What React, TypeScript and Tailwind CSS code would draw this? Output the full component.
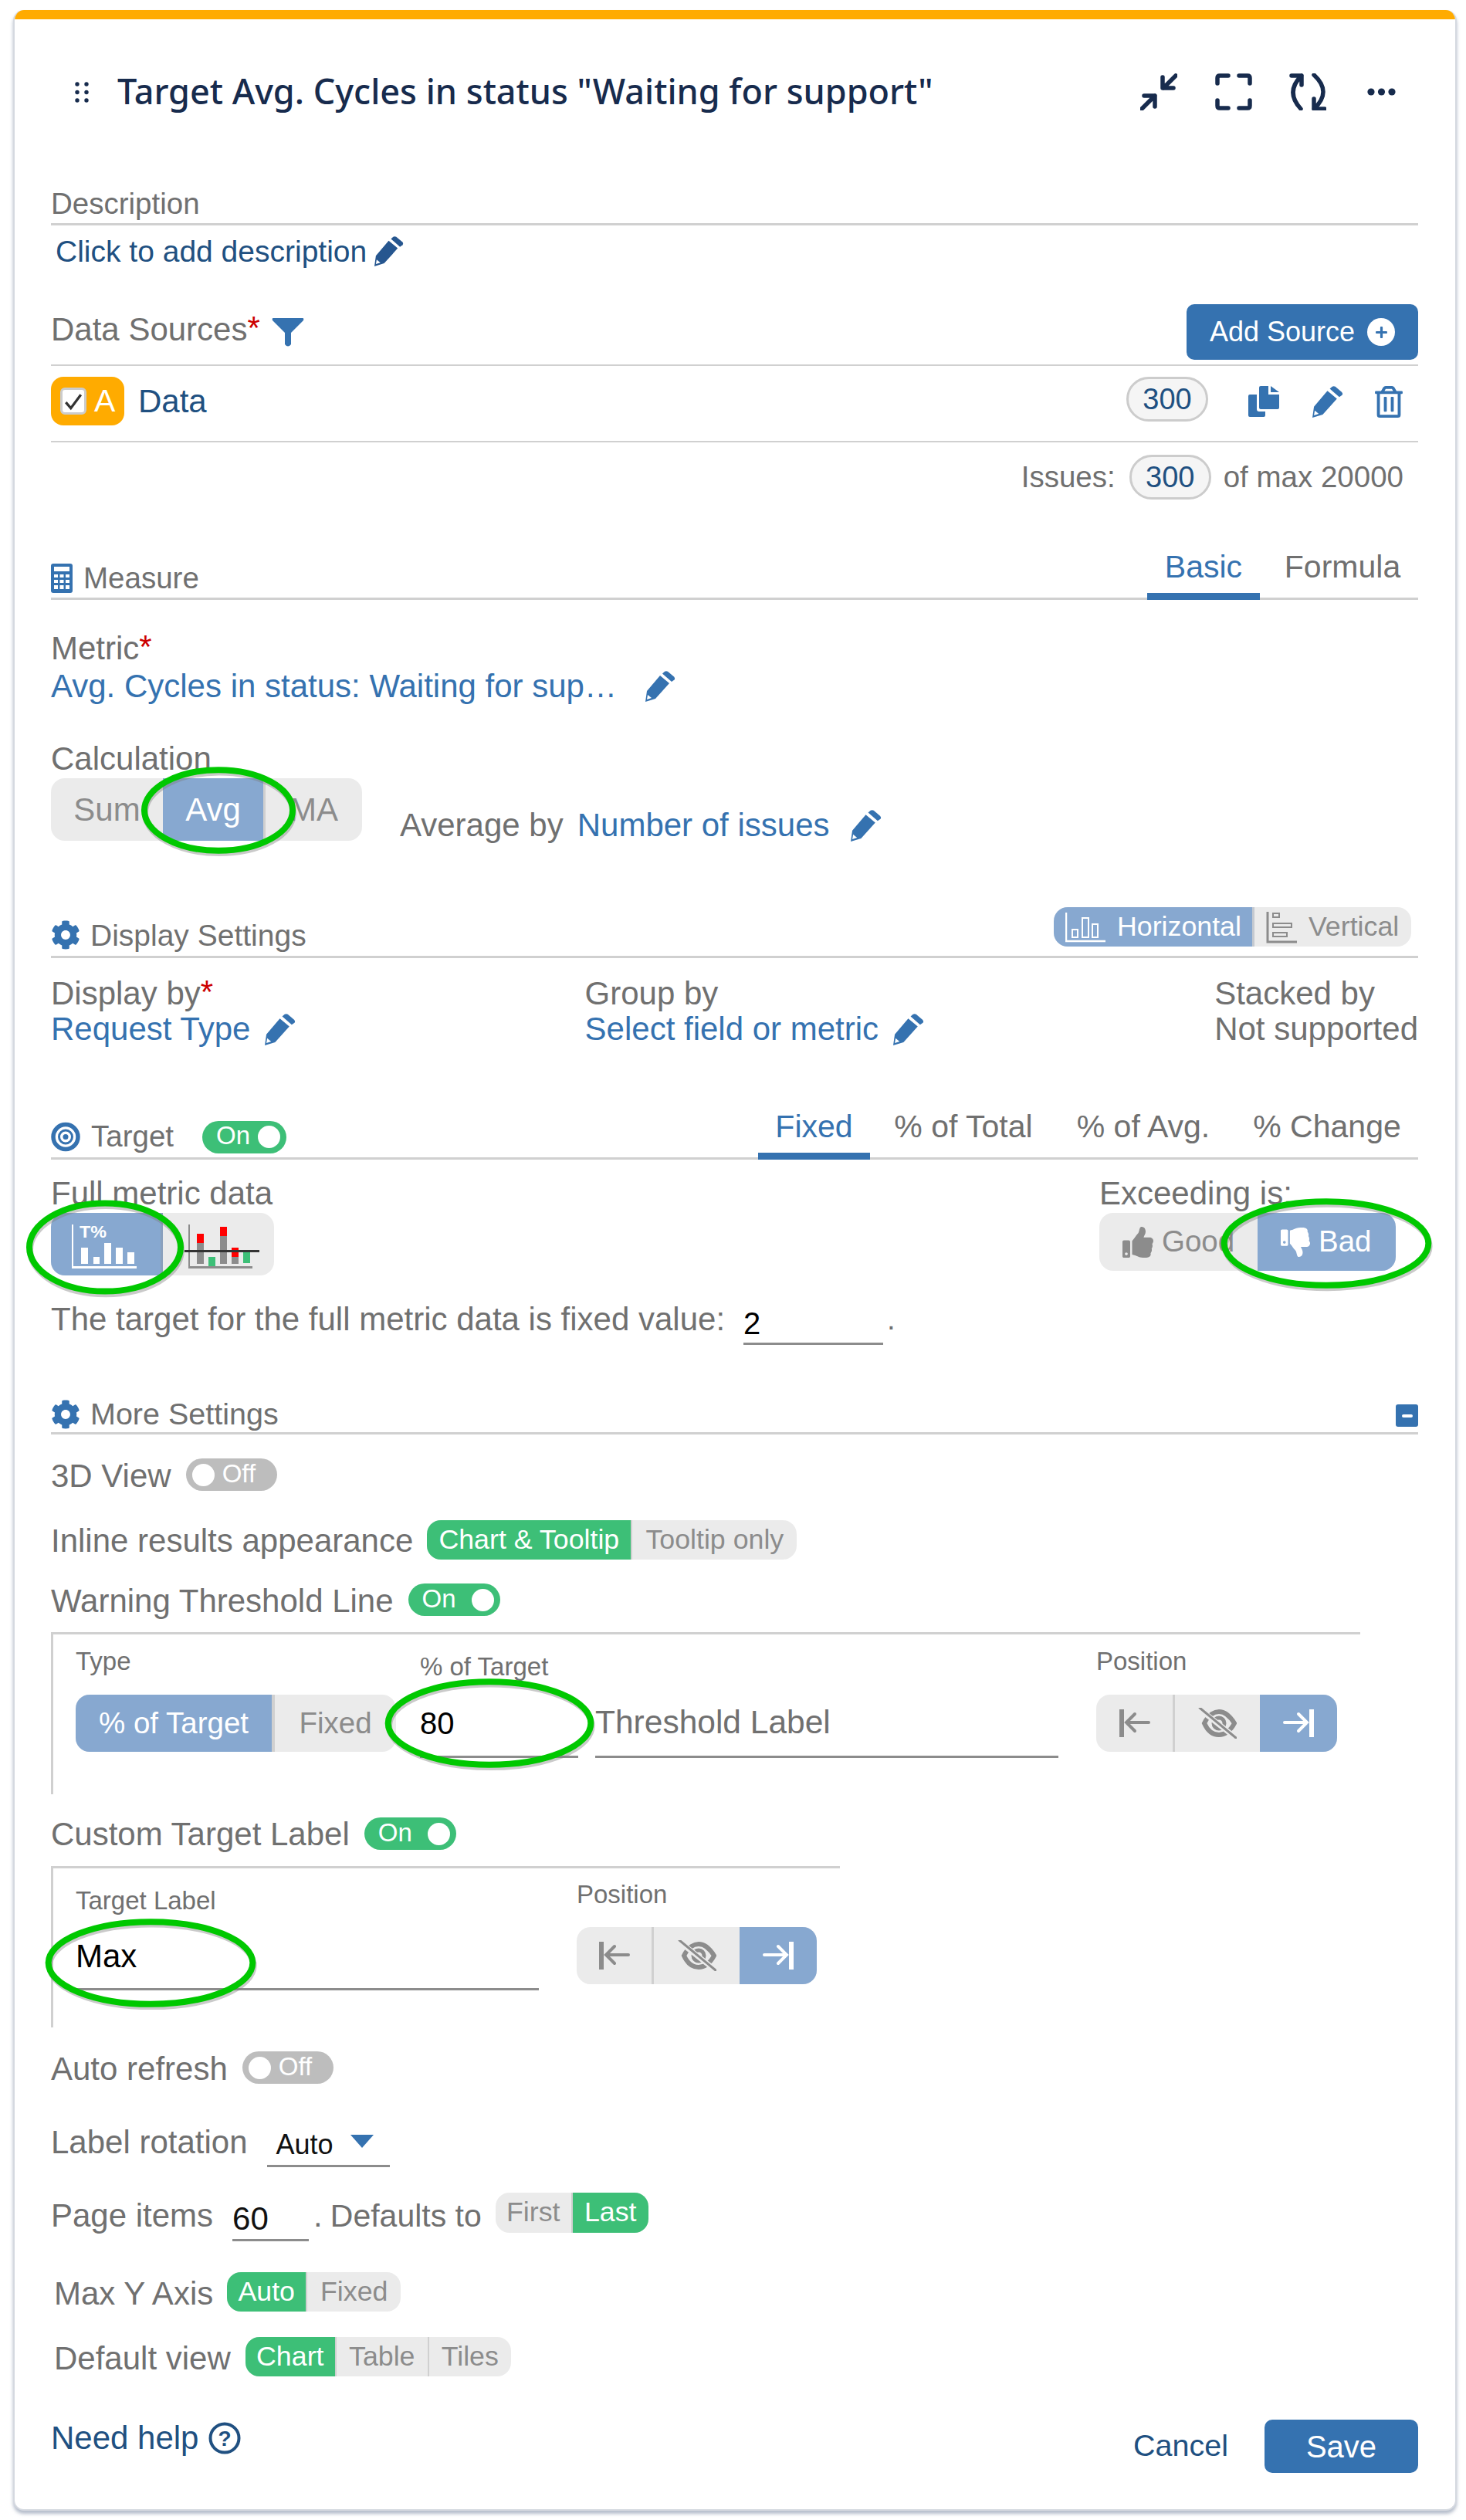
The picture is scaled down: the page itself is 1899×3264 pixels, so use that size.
import React from "react";
import { FaCog, FaRegTrashAlt, FaThumbsUp, FaThumbsDown, FaPlus } from "react-icons/fa";

const Pencil = ({ className }: { className: string }) => (
  <svg viewBox="0 0 40 40" className={className} fill="currentColor">
    <path d="M3 26 L20 6 L32 16 L14 36 L1 40 Z M4 31 L3 37 L9 35 Z" fillRule="evenodd" />
    <path d="M23 3.5 L26 0.8 Q28 -0.5 30 0.8 L38 7.5 Q40 9.5 38.5 11.5 L35 14 Z" />
  </svg>
);

const Star = () => <span className="text-[#cc0000] relative -top-[2px]">*</span>;

const Gear = () => <FaCog className="w-[38px] h-[38px] text-[#3572b0] shrink-0" />;

const Toggle = ({ on, className }: { on: boolean; className: string }) =>
  on ? (
    <div className={`flex items-center justify-between rounded-full bg-[#3dbf77] pl-[18px] pr-[8px] text-white text-[33px] leading-none shrink-0 ${className}`}>
      <span className="-mt-[4px]">On</span>
      <span className="block w-[29px] h-[29px] rounded-full bg-white" />
    </div>
  ) : (
    <div className={`flex items-center rounded-full bg-[#bdbdbd] pl-[8px] gap-[10px] text-white text-[33px] leading-none shrink-0 ${className}`}>
      <span className="block w-[29px] h-[29px] rounded-full bg-white" />
      <span className="-mt-[4px]">Off</span>
    </div>
  );

const Tab = ({ label, active, w }: { label: string; active?: boolean; w: string }) => (
  <div className={`flex items-center justify-center -mb-[3px] h-[70px] pb-[7px] text-[41px] leading-none ${w} ${active ? "text-[#3572b0] border-b-[9px] border-[#3572b0]" : "text-[#707070] border-b-[9px] border-transparent"}`}>
    {label}
  </div>
);

const Seg = ({ items, className, size }: { items: { label: string; w: string; active?: boolean }[]; className: string; size: string }) => (
  <div className={`flex rounded-[18px] overflow-hidden bg-[#ebebeb] text-[#8c8c8c] shrink-0 ${className} ${size}`}>
    {items.map((it, i) => (
      <div key={i} className={`flex items-center justify-center h-full border-r-[2px] last:border-r-0 border-[#d0d0d0] ${it.w} ${it.active ? "bg-[#3dbf77] text-white" : ""}`}>
        {it.label}
      </div>
    ))}
  </div>
);

const ArrowLeftBar = () => (
  <svg viewBox="0 0 40 36" className="w-[40px] h-[36px]" fill="none" stroke="currentColor" strokeWidth="4" strokeLinecap="round">
    <path d="M3 0 V36" strokeWidth="6" strokeLinecap="butt" />
    <path d="M38 17 H9 M20 6 L9 17 L20 28" />
  </svg>
);
const ArrowRightBar = () => (
  <svg viewBox="0 0 40 36" className="w-[40px] h-[36px]" fill="none" stroke="currentColor" strokeWidth="4" strokeLinecap="round">
    <path d="M37 0 V36" strokeWidth="6" strokeLinecap="butt" />
    <path d="M2 17 H31 M20 6 L31 17 L20 28" />
  </svg>
);
const EyeOff = () => (
  <svg viewBox="0 0 50 40" className="w-[50px] h-[40px]" fill="none" stroke="currentColor">
    <path d="M8 20 C14 8 22 5 27 5 C36 5 42 12 47 20 C42 30 34 35 27 35 C18 35 12 29 8 20 Z" strokeWidth="6" />
    <circle cx="27" cy="20" r="7" strokeWidth="5" />
    <path d="M1 1 L49 39" strokeWidth="7" stroke="#ebebeb" />
    <path d="M2 0 L49 39" strokeWidth="3" strokeLinecap="round" />
  </svg>
);

const PosSeg = ({ widths }: { widths: [string, string, string] }) => (
  <div className="flex h-[74px] rounded-[18px] overflow-hidden bg-[#ebebeb] text-[#8c8c8c] shrink-0">
    <div className={`flex items-center justify-center border-r-[3px] border-[#d0d0d0] ${widths[0]}`}><ArrowLeftBar /></div>
    <div className={`flex items-center justify-center ${widths[1]}`}><EyeOff /></div>
    <div className={`flex items-center justify-center bg-[#87a8d0] text-white ${widths[2]}`}><ArrowRightBar /></div>
  </div>
);

const Header = ({ children, right, h, inner }: { children: React.ReactNode; right?: React.ReactNode; h: string; inner?: string }) => (
  <div className={`flex justify-between items-end border-b-[3px] border-[#d0d0d0] ${h}`}>
    <div className={`flex items-center h-full ${inner ?? ""}`}>{children}</div>
    {right}
  </div>
);

const Ellipse = ({ className }: { className: string }) => (
  <svg className={`absolute overflow-visible pointer-events-none ${className}`} viewBox="0 0 100 100" preserveAspectRatio="none">
    <ellipse cx="50" cy="50" rx="49" ry="48" fill="none" stroke="#7a7a7a" strokeOpacity="0.4" strokeWidth="8" vectorEffect="non-scaling-stroke" transform="translate(0.5 3)" />
    <ellipse cx="50" cy="50" rx="49" ry="48" fill="none" stroke="#00c800" strokeWidth="8" vectorEffect="non-scaling-stroke" />
  </svg>
);

export default function App() {
  return (
    <div className="relative bg-white w-[1899px] h-[3264px] pt-[13px] pl-[17px] text-[#707070] text-[42px] leading-none" style={{ fontFamily: '"Liberation Sans", Arial, sans-serif' }}>
      <div className="w-[1870px] h-[3239px] bg-white border-x-[2px] border-b-[2px] border-[#d5d9e0] rounded-[14px] overflow-hidden shadow-[0_4px_4px_rgba(120,135,160,0.55)]">
        <div className="h-[12px] bg-[#ffab00]" />
        <div className="pl-[47px] pr-[48px]">
          {/* Title */}
          <div className="flex items-center justify-between h-[48px] mt-[70px]">
            <div className="flex items-center">
              <svg viewBox="0 0 18 27" className="w-[18px] h-[27px] ml-[31px] text-[#172b4d]" fill="currentColor">
                <circle cx="3" cy="3" r="2.7" /><circle cx="15" cy="3" r="2.7" />
                <circle cx="3" cy="13.5" r="2.7" /><circle cx="15" cy="13.5" r="2.7" />
                <circle cx="3" cy="24" r="2.7" /><circle cx="15" cy="24" r="2.7" />
              </svg>
              <div className="ml-[37px] -mt-[4px] text-[45px] font-medium whitespace-nowrap text-[#172b4d]" style={{ fontFamily: '"Noto Sans", "Open Sans", sans-serif' }}>
                Target Avg. Cycles in status "Waiting for support"
              </div>
            </div>
            <div className="flex items-center text-[#172b4d] mr-[29px]">
              <svg viewBox="0 0 48 48" className="w-[48px] h-[48px]" fill="none" stroke="currentColor" strokeWidth="5.5" strokeLinecap="round" strokeLinejoin="round">
                <path d="M46 3 L30 19 M29 5 V19 H43" />
                <path d="M2 46 L19 29 M5 29 H19 V43" />
              </svg>
              <svg viewBox="0 0 48 48" className="w-[48px] h-[48px] ml-[49px]" fill="none" stroke="currentColor" strokeWidth="5.5" strokeLinecap="round" strokeLinejoin="round">
                <path d="M3 13 V6 Q3 3 6 3 H17 M31 3 H42 Q45 3 45 6 V13 M45 35 V42 Q45 45 42 45 H31 M17 45 H6 Q3 45 3 42 V35" />
              </svg>
              <svg viewBox="0 0 48 48" className="w-[48px] h-[48px] ml-[48px]" fill="none" stroke="currentColor" strokeWidth="5.5" strokeLinecap="round" strokeLinejoin="round">
                <path d="M3 3 H16 V15 M16 3 Q-5.5 24 15 46" />
                <path d="M46 46 H32 V33 M32 2 Q56 24 32 46" />
              </svg>
              <svg viewBox="0 0 37 10" className="w-[37px] h-[10px] ml-[53px]" fill="currentColor">
                <circle cx="5" cy="5" r="4.6" /><circle cx="18.5" cy="5" r="4.6" /><circle cx="32" cy="5" r="4.6" />
              </svg>
            </div>
          </div>

          {/* Description */}
          <div className="mt-[97px] h-[52px] flex items-center border-b-[3px] border-[#d0d0d0] text-[38.5px]">Description</div>
          <div className="mt-[13px] h-[40px] flex items-center ml-[6px] text-[39px] text-[#205081]">
            Click to add description
            <Pencil className="w-[39px] h-[39px] ml-[9px] text-[#26568f]" />
          </div>

          {/* Data Sources */}
          <div className="mt-[49px] flex justify-between items-start border-b-[2px] border-[#d0d0d0] h-[80px]">
            <div className="flex items-center h-[66px]">
              <span>Data Sources<Star /></span>
              <svg viewBox="0 0 42 37" className="w-[42px] h-[37px] ml-[15px] mt-[6px] text-[#3572b0]" fill="currentColor">
                <path d="M2 0 H40 Q42 0 41 3 L25 19 V34 Q21 39 17 34 V19 L1 3 Q0 0 2 0 Z" />
              </svg>
            </div>
            <div className="flex items-center w-[300px] h-[72px] rounded-[10px] bg-[#3572b0] text-white text-[36px] pl-[30px]">
              Add Source
              <span className="ml-[16px] flex items-center justify-center w-[36px] h-[36px] rounded-full bg-white text-[#3572b0]"><FaPlus className="w-[17px] h-[17px]" /></span>
            </div>
          </div>

          {/* Row A */}
          <div className="flex items-start justify-between h-[99px] border-b-[2px] border-[#d0d0d0] pt-[14px]">
            <div className="flex items-start">
              <div className="relative flex items-center w-[95px] h-[63px] rounded-[16px] bg-[#ffab00] pl-[12px]">
                <div className="flex items-center justify-center w-[34px] h-[35px] rounded-[6px] bg-white border-[3px] border-[#cccccc]">
                  <svg viewBox="0 0 24 24" className="w-[26px] h-[26px]" fill="none" stroke="#333333" strokeWidth="3"><path d="M3 13 L9 20 L21 4" /></svg>
                </div>
                <span className="ml-[10px] text-white text-[41px]">A</span>
              </div>
              <span className="ml-[18px] mt-[11px] text-[#205081]">Data</span>
            </div>
            <div className="flex items-start">
              <div className="flex items-center justify-center w-[106px] h-[58px] rounded-full bg-[#f5f5f5] border-[3px] border-[#cccccc] text-[38px] text-[#205081]">300</div>
              <svg viewBox="0 0 40 40" className="w-[40px] h-[40px] ml-[52px] mt-[12px] text-[#3572b0]" fill="currentColor">
                <path d="M14 2 Q14 0 16 0 H26 V11 H40 V28 Q40 30 38 30 H16 Q14 30 14 28 Z" />
                <path d="M29 0 L40 8 H29 Z" />
                <path d="M0 13 Q0 11 2 11 H11 V30 Q11 33 14 33 H22 V38 Q22 40 20 40 H2 Q0 40 0 38 Z" />
              </svg>
              <Pencil className="w-[41px] h-[41px] ml-[42px] mt-[12px] text-[#3572b0]" />
              <FaRegTrashAlt className="w-[36px] h-[41px] ml-[41px] mr-[20px] mt-[12px] text-[#3572b0]" />
            </div>
          </div>

          {/* Issues */}
          <div className="mt-[16px] flex items-center justify-end h-[58px] pr-[19px] text-[38.5px]">
            Issues:
            <div className="flex items-center justify-center ml-[18px] w-[106px] h-[58px] rounded-full bg-[#f5f5f5] border-[3px] border-[#cccccc] text-[38px] text-[#205081]">300</div>
            <span className="ml-[16px]">of max 20000</span>
          </div>

          {/* Measure */}
          <Header
            h="mt-[73px] h-[57px]"
            inner="pt-[4px]"
            right={
              <div className="flex">
                <Tab label="Basic" active w="w-[146px]" />
                <Tab label="Formula" w="w-[205px] pl-[9px]" />
              </div>
            }
          >
            <svg viewBox="0 0 28 38" className="w-[28px] h-[38px] text-[#3572b0]">
              <rect width="28" height="38" rx="3" fill="currentColor" />
              <rect x="4" y="4" width="20" height="6" fill="#ffffff" />
              <g fill="#ffffff">
                <rect x="4" y="14" width="5" height="4" /><rect x="11.5" y="14" width="5" height="4" /><rect x="19" y="14" width="5" height="4" />
                <rect x="4" y="21" width="5" height="4" /><rect x="11.5" y="21" width="5" height="4" /><rect x="19" y="21" width="5" height="4" />
                <rect x="4" y="28" width="5" height="5" /><rect x="11.5" y="28" width="5" height="5" /><rect x="19" y="28" width="5" height="5" />
              </g>
            </svg>
            <span className="ml-[14px] text-[38.5px]">Measure</span>
          </Header>

          <div className="mt-[41px] h-[44px] flex items-center"><span>Metric<Star /></span></div>
          <div className="mt-[7px] h-[40px] flex items-center text-[#3572b0]">
            <span>Avg. Cycles in status: Waiting for sup…</span>
            <Pencil className="w-[40px] h-[40px] ml-[36px] text-[#3572b0]" />
          </div>

          <div className="mt-[51px] h-[46px] flex items-center">Calculation</div>
          <div className="flex items-start">
            <Seg
              className="h-[81px] mt-[2px]"
              size="text-[42px]"
              items={[
                { label: "Sum", w: "w-[145px] !border-r-0" },
                { label: "Avg", w: "w-[133px] !bg-[#87a8d0] text-white !border-r-[3px]" },
                { label: "MA", w: "w-[125px]" },
              ]}
            />
            <div className="flex items-center h-[40px] mt-[43px] ml-[49px]">
              <span>Average by</span>
              <span className="ml-[18px] text-[#3572b0]">Number of issues</span>
              <Pencil className="w-[41px] h-[41px] ml-[26px] text-[#3572b0]" />
            </div>
          </div>

          {/* Display settings */}
          <Header
            h="mt-[87px] h-[65px]"
            inner="pt-[8px]"
            right={
              <div className="flex h-[51px] mb-[12px] mr-[9px] rounded-[18px] overflow-hidden bg-[#ebebeb] text-[35.75px]">
                <div className="flex items-center w-[260px] bg-[#87a8d0] text-white pl-[15px] border-r-[3px] border-[#c4c9d0]">
                  <svg viewBox="0 0 52 40" className="w-[52px] h-[40px]" fill="none" stroke="currentColor" strokeWidth="2">
                    <path d="M1 1 V38 H52" strokeWidth="2.5" />
                    <path d="M9 23 H16 V33 H9 Z M22 8 H30 V33 H22 Z M35 16 H42 V33 H35 Z" />
                  </svg>
                  <span className="ml-[15px]">Horizontal</span>
                </div>
                <div className="flex items-center w-[203px] text-[#8c8c8c] pl-[15px]">
                  <svg viewBox="0 0 40 42" className="w-[40px] h-[42px]" fill="none" stroke="currentColor" strokeWidth="2">
                    <path d="M2 1 V40 H40" strokeWidth="3" />
                    <path d="M9 3 H17 V8 H9 Z M9 16 H33 V21 H9 Z M9 28 H27 V33 H9 Z" />
                  </svg>
                  <span className="ml-[15px]">Vertical</span>
                </div>
              </div>
            }
          >
            <Gear />
            <span className="ml-[13px] text-[39px]">Display Settings</span>
          </Header>

          <div className="flex mt-[24px]">
            <div className="w-[692px]">
              <div className="h-[44px] flex items-center"><span>Display by<Star /></span></div>
              <div className="mt-[4px] h-[40px] flex items-center text-[#3572b0]">Request Type<Pencil className="w-[41px] h-[41px] ml-[18px]" /></div>
            </div>
            <div className="w-[816px]">
              <div className="h-[44px] flex items-center">Group by</div>
              <div className="mt-[4px] h-[40px] flex items-center text-[#3572b0]">Select field or metric<Pencil className="w-[41px] h-[41px] ml-[18px]" /></div>
            </div>
            <div className="flex-1 whitespace-nowrap">
              <div className="h-[44px] flex items-center">Stacked by</div>
              <div className="mt-[4px] h-[40px] flex items-center">Not supported</div>
            </div>
          </div>

          {/* Target */}
          <Header
            h="mt-[78px] h-[71px]"
            inner="pt-[15px]"
            right={
              <div className="flex">
                <Tab label="Fixed" active w="w-[145px]" />
                <Tab label="% of Total" w="w-[242px]" />
                <Tab label="% of Avg." w="w-[224px]" />
                <Tab label="% Change" w="w-[244px] pl-[8px]" />
              </div>
            }
          >
            <svg viewBox="0 0 38 39" className="w-[38px] h-[39px] text-[#3572b0]" fill="none" stroke="currentColor">
              <circle cx="19" cy="19.5" r="16" strokeWidth="5.5" />
              <circle cx="19" cy="19.5" r="8.5" strokeWidth="3" />
              <circle cx="19" cy="19.5" r="3.5" fill="currentColor" stroke="none" />
            </svg>
            <span className="ml-[14px] text-[38.5px]">Target</span>
            <Toggle on className="ml-[37px] w-[109px] h-[42px]" />
          </Header>

          <div className="flex justify-between mt-[22px]">
            <div>
              <div className="h-[44px] flex items-center">Full metric data</div>
              <div className="flex mt-[3px] w-[289px] h-[81px] rounded-[18px] overflow-hidden bg-[#ebebeb]">
                <div className="flex items-center justify-center w-[145px] pt-[4px] bg-[#87a8d0] border-r-[3px] border-[#8aa0bd]">
                  <svg viewBox="0 0 88 60" className="w-[88px] h-[60px] text-white" fill="currentColor">
                    <rect x="0" y="2" width="2" height="57" />
                    <rect x="0" y="56" width="84" height="3" />
                    <rect x="12" y="32" width="9" height="21" />
                    <rect x="28" y="44" width="8" height="9" />
                    <rect x="42" y="26" width="9" height="27" />
                    <rect x="57" y="32" width="9" height="21" />
                    <rect x="72" y="38" width="9" height="15" />
                    <text x="10" y="19" fontSize="22" fontWeight="700" textLength="35" lengthAdjust="spacingAndGlyphs" fontFamily="Liberation Sans">T%</text>
                  </svg>
                </div>
                <div className="flex-1 flex items-center justify-center pt-[4px] pl-[8px]">
                  <svg viewBox="0 0 97 60" className="w-[97px] h-[60px]">
                    <rect x="5" y="2" width="2" height="57" fill="#8c8c8c" />
                    <rect x="5" y="56" width="83" height="3" fill="#8c8c8c" />
                    <rect x="16" y="14" width="9" height="12" fill="#ff0000" />
                    <rect x="16" y="26" width="9" height="27" fill="#8c8c8c" />
                    <rect x="31" y="44" width="9" height="12" fill="#3dbf77" />
                    <rect x="46" y="5" width="9" height="12" fill="#ff0000" />
                    <rect x="46" y="17" width="9" height="36" fill="#8c8c8c" />
                    <rect x="61" y="32" width="9" height="12" fill="#ff0000" />
                    <rect x="61" y="44" width="9" height="9" fill="#8c8c8c" />
                    <rect x="76" y="38" width="9" height="14" fill="#3dbf77" />
                    <rect x="0" y="35" width="97" height="3" fill="#333333" />
                  </svg>
                </div>
              </div>
            </div>
            <div className="mr-[29px]">
              <div className="h-[44px] flex items-center">Exceeding is:</div>
              <div className="flex mt-[3px] w-[384px] h-[75px] rounded-[18px] overflow-hidden bg-[#ebebeb] text-[38.5px]">
                <div className="flex items-center w-[205px] text-[#8c8c8c] pl-[30px]">
                  <FaThumbsUp className="w-[40px] h-[40px]" />
                  <span className="ml-[11px]">Good</span>
                </div>
                <div className="flex items-center flex-1 bg-[#87a8d0] text-white pl-[30px]">
                  <FaThumbsDown className="w-[38px] h-[40px]" />
                  <span className="ml-[11px]">Bad</span>
                </div>
              </div>
            </div>
          </div>

          <div className="flex items-center mt-[35px] h-[44px]">
            <span>The target for the full metric data is fixed value:</span>
            <div className="ml-[24px] w-[181px] h-[53px] -mb-[13px] flex items-center border-b-[3px] border-[#8c8c8c] text-black text-[40px]">2</div>
            <span className="ml-[5px] text-[38.5px]">.</span>
          </div>

          {/* More settings */}
          <Header
            h="mt-[77px] h-[50px]"
            right={<div className="flex items-center justify-center w-[29px] h-[29px] mb-[7px] rounded-[3px] bg-[#3572b0]"><span className="block w-[14px] h-[4px] rounded-full bg-white" /></div>}
          >
            <Gear />
            <span className="ml-[13px] text-[39.5px]">More Settings</span>
          </Header>

          <div className="flex items-center mt-[31px] h-[42px]">
            <span className="mt-[4px]">3D View</span>
            <Toggle on={false} className="ml-[19px] w-[118px] h-[42px]" />
          </div>
          <div className="flex items-center mt-[38px] h-[51px]">
            <span className="mt-[3px]">Inline results appearance</span>
            <Seg
              className="ml-[18px] h-[51px]"
              size="text-[35.75px]"
              items={[
                { label: "Chart & Tooltip", w: "w-[266px]", active: true },
                { label: "Tooltip only", w: "w-[213px]" },
              ]}
            />
          </div>
          <div className="flex items-center mt-[31px] h-[42px]">
            <span className="mt-[4px]">Warning Threshold Line</span>
            <Toggle on className="ml-[19px] w-[119px] h-[42px]" />
          </div>

          {/* Threshold fieldset */}
          <div className="mt-[21px] w-[1696px] h-[210px] border-t-[3px] border-l-[3px] border-[#d0d0d0] pl-[29px] pt-[15px]">
            <div className="flex">
              <div className="w-[446px]">
                <div className="h-[38px] flex items-center text-[33px]">Type</div>
                <Seg
                  className="mt-[25px] h-[74px] w-[415px]"
                  size="text-[38.5px]"
                  items={[
                    { label: "% of Target", w: "w-[258px] !bg-[#87a8d0] text-white !border-r-[4px]" },
                    { label: "Fixed", w: "w-[157px]" },
                  ]}
                />
              </div>
              <div className="w-[227px]">
                <div className="h-[38px] mt-[7px] flex items-center text-[33px]">% of Target</div>
                <div className="mt-[18px] h-[82px] w-[205px] flex items-center border-b-[3px] border-[#8c8c8c] text-black text-[40px] pb-[6px]">80</div>
              </div>
              <div className="w-[649px]">
                <div className="h-[38px]" />
                <div className="mt-[25px] h-[82px] w-[600px] flex items-center border-b-[3px] border-[#8c8c8c] text-[42.5px] pb-[6px]">Threshold Label</div>
              </div>
              <div>
                <div className="h-[38px] flex items-center text-[33px]">Position</div>
                <div className="mt-[25px]"><PosSeg widths={["w-[102px]", "w-[110px]", "w-[100px]"]} /></div>
              </div>
            </div>
          </div>

          <div className="flex items-center mt-[30px] h-[42px]">
            <span className="mt-[2px]">Custom Target Label</span>
            <Toggle on className="ml-[19px] w-[119px] h-[42px]" />
          </div>

          {/* Target label fieldset */}
          <div className="mt-[21px] w-[1022px] h-[209px] border-t-[3px] border-l-[3px] border-[#d0d0d0] pl-[29px]">
            <div className="flex">
              <div className="w-[649px]">
                <div className="mt-[22px] h-[38px] flex items-center text-[33px]">Target Label</div>
                <div className="mt-[15px] h-[83px] w-[600px] flex items-center border-b-[3px] border-[#8c8c8c] text-black pb-[2px]">Max</div>
              </div>
              <div>
                <div className="mt-[14px] h-[38px] flex items-center text-[33px]">Position</div>
                <div className="mt-[24px]"><PosSeg widths={["w-[100px]", "w-[111px]", "w-[100px]"]} /></div>
              </div>
            </div>
          </div>

          <div className="flex items-center mt-[31px] h-[42px]">
            <span className="mt-[4px]">Auto refresh</span>
            <Toggle on={false} className="ml-[19px] w-[118px] h-[42px]" />
          </div>

          <div className="flex items-end mt-[52px] h-[56px]">
            <span className="pb-[11px]">Label rotation</span>
            <div className="ml-[25px] w-[159px] h-[56px] flex items-center border-b-[3px] border-[#8c8c8c] pl-[12px] text-[#111111] text-[36px]">
              Auto
              <svg viewBox="0 0 30 17" className="w-[30px] h-[17px] ml-[22px] -mt-[9px] text-[#3572b0]" fill="currentColor"><path d="M0 0 H30 L15 17 Z" /></svg>
            </div>
          </div>

          <div className="flex items-center mt-[33px] h-[60px]">
            <span>Page items</span>
            <div className="ml-[25px] w-[99px] h-[50px] self-start mt-[13px] pb-[6px] flex items-center border-b-[3px] border-[#8c8c8c] text-[#111111]">60</div>
            <span className="ml-[6px]">.</span>
            <span className="ml-[10px] text-[41px]">Defaults to</span>
            <Seg
              className="ml-[18px] h-[52px] self-start"
              size="text-[35.75px]"
              items={[
                { label: "First", w: "w-[100px]" },
                { label: "Last", w: "w-[98px]", active: true },
              ]}
            />
          </div>

          <div className="flex items-center mt-[43px] h-[51px] pl-[4px]">
            <span className="mt-[4px]">Max Y Axis</span>
            <Seg
              className="ml-[18px] h-[51px]"
              size="text-[35.75px]"
              items={[
                { label: "Auto", w: "w-[104px]", active: true },
                { label: "Fixed", w: "w-[121px]" },
              ]}
            />
          </div>

          <div className="flex items-center mt-[33px] h-[51px] pl-[4px]">
            <span className="mt-[5px]">Default view</span>
            <Seg
              className="ml-[19px] h-[51px]"
              size="text-[35.75px]"
              items={[
                { label: "Chart", w: "w-[118px]", active: true },
                { label: "Table", w: "w-[120px]" },
                { label: "Tiles", w: "w-[106px]" },
              ]}
            />
          </div>

          <div className="flex justify-between items-start mt-[56px]">
            <div className="flex items-center h-[44px] mt-[2px] text-[#205081]">
              Need help
              <svg viewBox="0 0 42 42" className="w-[42px] h-[42px] ml-[13px]" fill="none" stroke="currentColor">
                <circle cx="21" cy="21" r="18.5" strokeWidth="4" />
                <text x="21" y="31" textAnchor="middle" fontSize="28" fontWeight="700" fill="currentColor" stroke="none" fontFamily="Liberation Sans">?</text>
              </svg>
            </div>
            <div className="flex items-start">
              <span className="mt-[14px] text-[#205081] text-[39.5px]">Cancel</span>
              <div className="ml-[47px] flex items-center justify-center w-[199px] h-[69px] rounded-[10px] bg-[#3572b0] text-white text-[40px]">Save</div>
            </div>
          </div>
        </div>
      </div>

      {/* Green annotation ellipses */}
      <Ellipse className="left-[185px] top-[995px] w-[196px] h-[109px]" />
      <Ellipse className="left-[36px] top-[1556px] w-[200px] h-[119px]" />
      <Ellipse className="left-[1583px] top-[1554px] w-[270px] h-[113px]" />
      <Ellipse className="left-[500px] top-[2176px] w-[268px] h-[112px]" />
      <Ellipse className="left-[60px] top-[2487px] w-[270px] h-[111px]" />
    </div>
  );
}
